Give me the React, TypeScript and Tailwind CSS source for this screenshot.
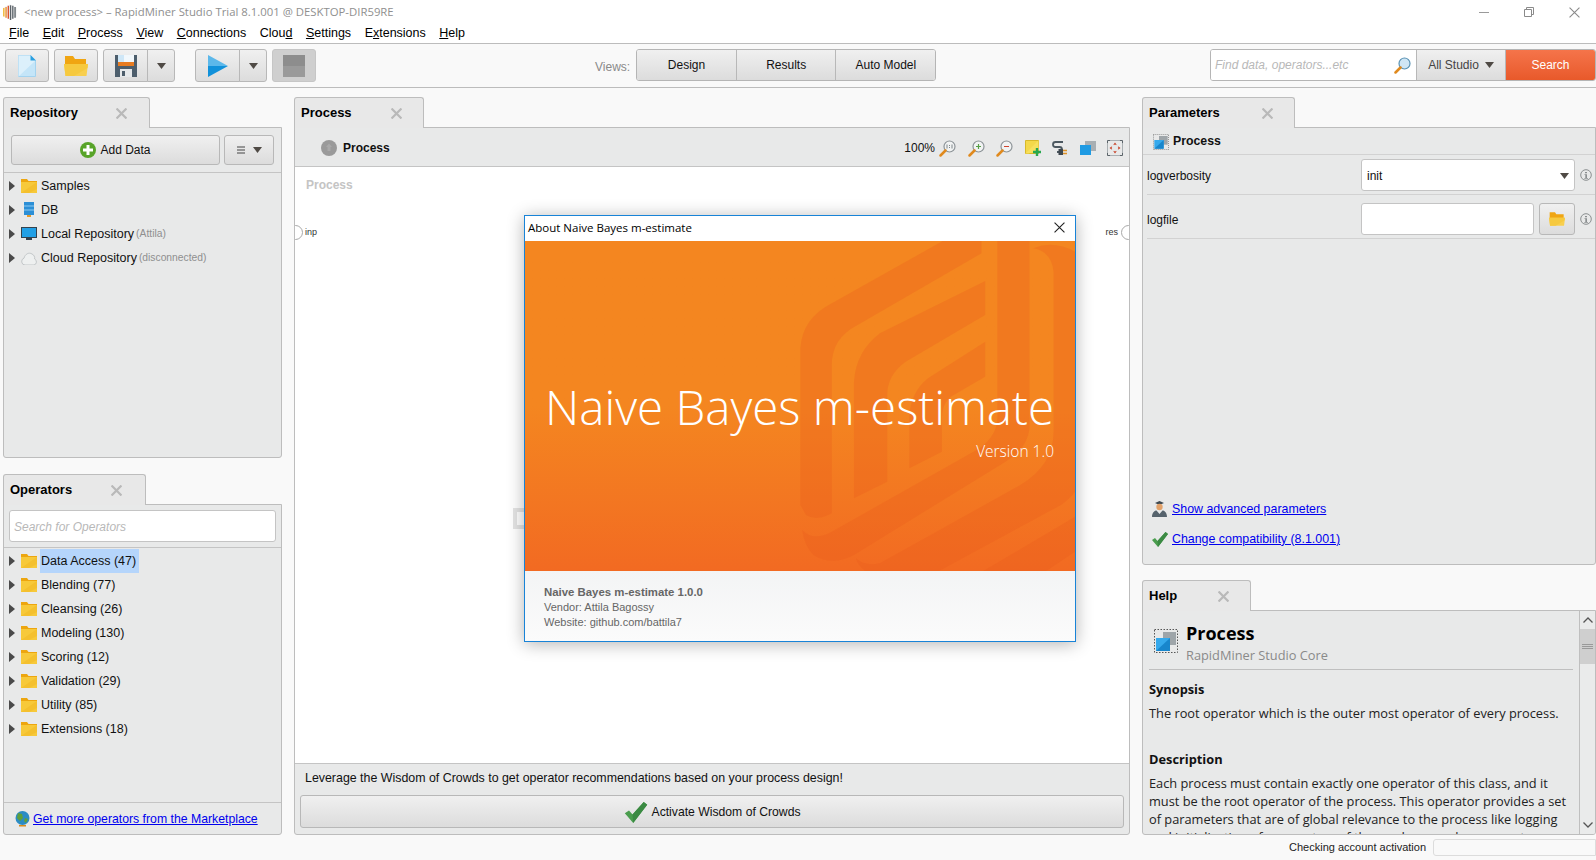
import type { ReactNode } from 'react'

const SANS = "font-['Liberation_Sans',Arial,sans-serif]"
const OPEN = "font-['Open_Sans',sans-serif]"

const MENU = [
  ['', 'F', 'ile'],
  ['', 'E', 'dit'],
  ['', 'P', 'rocess'],
  ['', 'V', 'iew'],
  ['', 'C', 'onnections'],
  ['Clou', 'd', ''],
  ['', 'S', 'ettings'],
  ['E', 'x', 'tensions'],
  ['', 'H', 'elp'],
]

const OPERATORS = [
  'Data Access (47)',
  'Blending (77)',
  'Cleansing (26)',
  'Modeling (130)',
  'Scoring (12)',
  'Validation (29)',
  'Utility (85)',
  'Extensions (18)',
]

function Folder({ w = 16, h = 14 }: { w?: number; h?: number }) {
  return (
    <svg width={w} height={h} viewBox="0 0 16 14">
      <path d="M0 0h6l1.500 2H16v12H0z" fill="#eda60f" />
      <path d="M0 3h16v11H0z" fill="#f7c93a" />
      <path d="M16 3v7l-8 4H0z" fill="#f4c02e" />
    </svg>
  )
}

function OpenFolder({ w = 24, h = 20 }: { w?: number; h?: number }) {
  return (
    <svg width={w} height={h} viewBox="0 0 24 20">
      <path d="M1 0h8l2 3h11v7H1z" fill="#f0a512" />
      <path d="M0 8h24l-1.500 12H1.500z" fill="#f8cf4f" />
      <path d="M24 8l-.5 4L10 20H1.500L0 8z" fill="#f6c93f" />
    </svg>
  )
}

function TreeArrow() {
  return (
    <svg width="6" height="10" viewBox="0 0 6 10">
      <path d="M0 0l6 5-6 5z" fill="#4a4a4a" />
    </svg>
  )
}

function Caret({ color = '#4f4a45' }: { color?: string }) {
  return (
    <svg width="9" height="6" viewBox="0 0 9 6">
      <path d="M0 0h9L4.500 6z" fill={color} />
    </svg>
  )
}

function CloseX({ size = 11, color = '#b9b9b9', width = 2 }: { size?: number; color?: string; width?: number }) {
  return (
    <svg width={size} height={size} viewBox="0 0 10 10">
      <path d="M0.500 0.500l9 9M9.500 0.500l-9 9" stroke={color} strokeWidth={width} fill="none" />
    </svg>
  )
}

function Check({ w = 16, h = 15 }: { w?: number; h?: number }) {
  return (
    <svg width={w} height={h} viewBox="0 0 16 15">
      <path d="M0 8l3-2 2.500 3L13.500 0 16 2 6 15z" fill="#4a9d4e" />
      <path d="M13.500 0L16 2 6 15l-.5-6z" fill="#3b8a43" />
    </svg>
  )
}

function ProcessIcon({ size = 16 }: { size?: number }) {
  return (
    <svg width={size} height={size} viewBox="0 0 24 24">
      <rect x="0.500" y="0.500" width="23" height="23" fill="none" stroke="#555" strokeDasharray="1.500 1.500" />
      <rect x="9" y="3" width="13" height="13" fill="#9ea5a9" />
      <rect x="2" y="9" width="14" height="13" fill="#35a9ec" />
      <path d="M2 22L16 9v13z" fill="#1886cc" />
    </svg>
  )
}

function Magnifier({ kind }: { kind: 'plain' | 'fit' | 'plus' | 'minus' }) {
  return (
    <svg width="17" height="17" viewBox="0 0 17 17">
      <circle cx="10.500" cy="6.500" r="5.500" fill={kind === 'plain' ? '#cfe6f5' : '#f1f3f3'} stroke={kind === 'plain' ? '#5a93b5' : '#8d9498'} strokeWidth="1.200" />
      <path d="M6.500 10.500L1.500 15.500" stroke="#e08a1e" strokeWidth="2.500" strokeLinecap="round" />
      {kind === 'plus' && <path d="M8 6.500h5M10.500 4v5" stroke="#55a044" strokeWidth="1.200" />}
      {kind === 'minus' && <path d="M8 6.500h5" stroke="#d0452f" strokeWidth="1.200" />}
      {kind === 'fit' && <path d="M8 4.500v4M13 4.500v4M10.500 5v1M10.500 7v1" stroke="#7f868a" strokeWidth="1" />}
    </svg>
  )
}

function InfoIcon() {
  return (
    <svg width="12" height="12" viewBox="0 0 12 12">
      <circle cx="6" cy="6" r="5.300" fill="none" stroke="#8b8f90" />
      <path d="M5 3h2v1.300H5zM4.500 5.300H7V9h1v.8H4.300V9h1V6.100h-.8z" fill="#8b8f90" />
    </svg>
  )
}

function Panel({
  title,
  tabWidth,
  closeAt,
  className,
  children,
}: {
  title: string
  tabWidth: string
  closeAt: string
  className?: string
  children: ReactNode
}) {
  return (
    <div className={`flex min-h-0 flex-col ${className ?? ''}`}>
      <div className={`relative z-10 -mb-px flex h-[31px] shrink-0 items-center rounded-t-[3px] border border-b-0 border-[#bdbdbd] bg-[#e8e8e8] pl-[6px] text-[13px] font-bold text-black ${tabWidth}`}>
        <span className={closeAt}>{title}</span>
        <CloseX />
      </div>
      <div className="flex min-h-0 flex-1 flex-col overflow-hidden rounded-b-[3px] border border-[#bdbdbd] bg-[#e8e9e9]">
        {children}
      </div>
    </div>
  )
}

function TreeRow({ icon, children }: { icon: ReactNode; children: ReactNode }) {
  return (
    <div className="flex h-[24px] items-center pl-[5px] text-[12.500px] text-[#111]">
      <TreeArrow />
      <span className="ml-[6px] flex w-[20px] shrink-0 justify-start">{icon}</span>
      {children}
    </div>
  )
}

function GradButton({ className, children }: { className?: string; children: ReactNode }) {
  return (
    <div className={`flex items-center justify-center border border-[#b8b8b8] bg-linear-to-b from-[#f0f0f0] to-[#dcdcdc] ${className ?? ''}`}>
      {children}
    </div>
  )
}

function TitleBar() {
  return (
    <div className="flex h-[24px] items-center bg-white">
      <svg className="ml-[2px]" width="16" height="18" viewBox="0 0 14 16">
        <path d="M7 1l6 3v8l-6 3-6-3V4z" fill="#f4f4f4" />
        <path d="M1.500 4.500v7.500" stroke="#f0b429" strokeWidth="1.200" />
        <path d="M3.500 3.500v9.500" stroke="#ee8a2a" strokeWidth="1.200" />
        <path d="M5.500 2.500v11.500" stroke="#d9502c" strokeWidth="1.200" />
        <path d="M7.500 2v13M9.500 2.500v11.500M11.500 3.500v9.500" stroke="#5a6268" strokeWidth="1.200" />
      </svg>
      <span className={`ml-[6px] text-[11.350px] text-[#8f8f8f] ${OPEN}`}>
        &lt;new process&gt; – RapidMiner Studio Trial 8.1.001 @ DESKTOP-DIR59RE
      </span>
      <div className="ml-auto flex items-center pr-[16px]">
        <span className="h-px w-[10px] bg-[#9a9a9a]" />
        <svg className="ml-[35px]" width="10" height="10" viewBox="0 0 10 10">
          <path d="M2.500 2.500V.5h7v7h-2M.5 2.500h7v7h-7z" fill="none" stroke="#8a8a8a" />
        </svg>
        <span className="ml-[35px] flex">
          <CloseX size={11} color="#8a8a8a" width={1} />
        </span>
      </div>
    </div>
  )
}

function MenuBar() {
  return (
    <div className="box-content flex h-[19px] items-center gap-[13.500px] border-b border-[#bcbcbc] bg-white pl-[9px] text-[12.500px] text-black">
      {MENU.map(([before, key, after]) => (
        <span key={before + key + after}>
          {before}
          <u>{key}</u>
          {after}
        </span>
      ))}
    </div>
  )
}

function Toolbar() {
  return (
    <div className="flex h-[44px] shrink-0 items-start border-b border-[#bcbcbc] bg-[#f9f9f9] pl-[5px] pt-[5px]">
      <GradButton className="h-[33px] w-[44px] rounded-[3px]">
        <svg width="18" height="22" viewBox="0 0 18 22">
          <path d="M.5.500h12l5 5v16H.5z" fill="#c4e5f8" stroke="#a3d3ef" />
          <path d="M.5.500h12l5 5L.5 21.500z" fill="#dcf0fb" />
          <path d="M12.500 0L18 5.500h-5.500z" fill="#2a9fe0" />
        </svg>
      </GradButton>
      <GradButton className="ml-[5px] h-[33px] w-[44px] rounded-[3px]">
        <OpenFolder />
      </GradButton>
      <GradButton className="ml-[5px] h-[33px] w-[45px] rounded-l-[3px]">
        <svg width="22" height="22" viewBox="0 0 22 22">
          <path d="M0 0h22v22H0z" fill="#4d5e6c" />
          <path d="M3 0h16v7H3z" fill="#cfe7f7" />
          <path d="M9 0h10v7H9z" fill="#f2f8fc" />
          <path d="M3 7h16v4H3z" fill="#e77c22" />
          <path d="M5 14h12v8H5z" fill="#e6e9eb" />
          <path d="M7 16h3v5H7z" fill="#4d5e6c" />
        </svg>
      </GradButton>
      <GradButton className="-ml-px h-[33px] w-[28px] rounded-r-[3px]">
        <Caret />
      </GradButton>
      <GradButton className="ml-[20px] h-[33px] w-[45px] rounded-l-[3px]">
        <svg width="20" height="22" viewBox="0 0 20 22">
          <path d="M0 0l20 11H0z" fill="#5cb8ea" />
          <path d="M0 22l20-11H0z" fill="#1191da" />
        </svg>
      </GradButton>
      <GradButton className="-ml-px h-[33px] w-[28px] rounded-r-[3px]">
        <Caret />
      </GradButton>
      <div className="ml-[5px] flex h-[33px] w-[44px] items-center justify-center rounded-[3px] border border-[#c6c6c6] bg-[#cfcfcf]">
        <div className="flex h-[22px] w-[22px] flex-col">
          <span className="flex-1 bg-[#8d8d8d]" />
          <span className="flex-1 bg-[#9a9a9a]" />
        </div>
      </div>

      <span className="ml-[279px] mt-[9px] text-[12px] text-[#8a8a8a]">Views:</span>
      <div className="ml-[6px] flex h-[32px] w-[300px] overflow-hidden rounded-[3px] border border-[#b5b5b5] text-[12px] text-[#111]">
        <GradButton className="flex-1 border-0 border-r">Design</GradButton>
        <GradButton className="flex-1 border-0 border-r">Results</GradButton>
        <GradButton className="flex-1 border-0">Auto Model</GradButton>
      </div>

      <div className="ml-auto flex h-[32px] w-[386px] overflow-hidden rounded-[3px] border border-[#b5b5b5] text-[12px]">
        <div className="flex w-[205px] items-center justify-between bg-white pl-[4px] pr-[5px]">
          <span className="italic text-[#b8b8b8]">Find data, operators...etc</span>
          <Magnifier kind="plain" />
        </div>
        <GradButton className="w-[90px] gap-[6px] border-0 border-x text-[#444]">
          All Studio
          <Caret />
        </GradButton>
        <div className="flex flex-1 items-center justify-center bg-linear-to-b from-[#f5744a] to-[#e8592a] text-white">
          Search
        </div>
      </div>
    </div>
  )
}

function LeftColumn() {
  return (
    <div className="flex w-[279px] shrink-0 flex-col">
      <Panel title="Repository" tabWidth="w-[147px]" closeAt="w-[106px]" className="h-[361px]">
        <div className="flex h-[45px] shrink-0 items-center gap-[4px] border-b border-[#c4c4c4] px-[7px] pb-[1px]">
          <GradButton className="h-[30px] w-[209px] gap-[4px] rounded-[3px] text-[12px] text-[#111]">
            <svg width="16" height="16" viewBox="0 0 16 16">
              <circle cx="8" cy="8" r="8" fill="#58a429" />
              <path d="M6.500 3h3v3.500H13v3H9.500V13h-3V9.500H3v-3h3.500z" fill="#fff" />
            </svg>
            Add Data
          </GradButton>
          <GradButton className="h-[30px] w-[50px] gap-[8px] rounded-[3px]">
            <svg width="8" height="8" viewBox="0 0 8 8">
              <path d="M0 1h8M0 4h8M0 7h8" stroke="#444" />
            </svg>
            <Caret />
          </GradButton>
        </div>
        <div className="pt-[1px]">
          <TreeRow icon={<Folder />}>Samples</TreeRow>
          <TreeRow
            icon={
              <svg className="ml-[3px]" width="10" height="16" viewBox="0 0 10 16">
                <path d="M0 0h10v13H0z" fill="#2c8fd6" />
                <path d="M0 4h10M0 8h10" stroke="#8ccaf0" />
                <path d="M3 13h4v2H3z" fill="#e59a28" />
              </svg>
            }
          >
            DB
          </TreeRow>
          <TreeRow
            icon={
              <svg width="16" height="14" viewBox="0 0 16 14">
                <path d="M0 0h16v11H0z" fill="#34424e" />
                <path d="M1 1h14v9H1z" fill="#22a0e6" />
                <path d="M5 11h6v2H5z" fill="#34424e" />
              </svg>
            }
          >
            Local Repository
            <span className="ml-[2px] text-[10.300px] text-[#8f8f8f]">(Attila)</span>
          </TreeRow>
          <TreeRow
            icon={
              <svg width="16" height="13" viewBox="0 0 16 13">
                <path d="M4 13a3.500 3.500 0 0 1-1-6.800C4 2 8 0 11 2c2 .8 3 3 2.600 5A3.200 3.200 0 0 1 13 13z" fill="#eef0f0" stroke="#c2c6c8" />
              </svg>
            }
          >
            Cloud Repository
            <span className="ml-[2px] text-[10.300px] text-[#8f8f8f]">(disconnected)</span>
          </TreeRow>
        </div>
      </Panel>

      <Panel title="Operators" tabWidth="w-[143px]" closeAt="w-[101px]" className="mt-[16px] flex-1">
        <div className="h-[43px] shrink-0 border-b border-[#c4c4c4] px-[5px] pt-[5px]">
          <div className="flex h-[32px] items-center rounded-[3px] border border-[#c4c4c4] bg-white pl-[4px] pt-px text-[12px] italic text-[#b8b8b8]">
            Search for Operators
          </div>
        </div>
        <div className="flex-1 pt-px">
          {OPERATORS.map((name, i) => (
            <TreeRow key={name} icon={<Folder />}>
              <span className={`-ml-px flex h-[24px] items-center pl-px pr-[3px] ${i === 0 ? 'bg-[#b5d5fb]' : ''}`}>{name}</span>
            </TreeRow>
          ))}
        </div>
        <div className="flex h-[32px] shrink-0 items-center border-t border-[#c4c4c4] pl-[11px] pt-px text-[12.250px] text-[#0000ee]">
          <svg width="15" height="16" viewBox="0 0 15 16">
            <path d="M4 14h7v1.500H4z" fill="#d98a1c" />
            <circle cx="7.500" cy="7" r="7" fill="#2b8cc4" />
            <path d="M3 2l4 1 1 4-3 3-3-3zM10 7l3 1-2 4-2-2z" fill="#5f9f3a" />
          </svg>
          <u className="ml-[3px]">Get more operators from the Marketplace</u>
        </div>
      </Panel>
    </div>
  )
}

function ProcessColumn() {
  return (
    <Panel title="Process" tabWidth="w-[130px]" closeAt="w-[90px]" className="ml-[12px] w-[836px] shrink-0">
      <div className="flex h-[39px] shrink-0 items-center border-b border-[#c4c4c4] pl-[26px] pr-[6px] pt-[2px]">
        <svg width="16" height="16" viewBox="0 0 16 16">
          <circle cx="8" cy="8" r="8" fill="#9a9a9a" />
          <path d="M8 3.500l3 3.500H9.500v4h-3V7H5z" fill="#a9a9a9" />
        </svg>
        <span className="ml-[6px] text-[12px] font-bold text-[#111]">Process</span>
        <span className="ml-auto text-[12px] text-[#111]">100%</span>
        <div className="ml-[4px] flex items-center gap-[11.500px]">
          <Magnifier kind="fit" />
          <Magnifier kind="plus" />
          <Magnifier kind="minus" />
          <svg width="16" height="16" viewBox="0 0 16 16">
            <path d="M.5.500h13v13H.5z" fill="#f4d84a" stroke="#d8b92a" />
            <path d="M13.500.5v10l-10 3h-3z" fill="#f7e05e" />
            <path d="M8 12h8M12 8v8" stroke="#29a84f" strokeWidth="2.400" />
          </svg>
          <svg width="16" height="16" viewBox="0 0 16 16">
            <path d="M11 2H3.500a2.500 2.500 0 0 0 0 5h4a2.500 2.500 0 0 1 0 5H5" fill="none" stroke="#4c5860" strokeWidth="1.800" />
            <path d="M6.500 9h4.500v6H6.500z" fill="#3e474e" />
            <path d="M11 10.500h4M11 13.500h4" stroke="#e0932a" strokeWidth="1.300" />
          </svg>
          <svg width="16" height="14" viewBox="0 0 16 14">
            <path d="M5 0h11v10H5z" fill="#a8afb3" />
            <path d="M0 4h11v10H0z" fill="#1f9be3" />
          </svg>
          <svg width="16" height="16" viewBox="0 0 16 16">
            <path d="M0.500 3.500v-3h3M12.500.5h3v3M15.500 12.500v3h-3M3.500 15.500h-3v-3" fill="none" stroke="#5a6368" />
            <path d="M3.500.5h9M3.500 15.500h9M.5 3.500v9M15.500 3.500v9" stroke="#a9afb2" />
            <circle cx="8" cy="8" r="3" fill="none" stroke="#e3e5e5" />
            <path d="M8 2.500l1.800 2.300H6.200zM8 13.500l1.800-2.300H6.200zM2.500 8l2.300-1.800v3.600zM13.500 8l-2.300-1.800v3.600z" fill="#c9472e" />
          </svg>
        </div>
      </div>

      <div className="relative flex-1 bg-white">
        <span className="absolute left-[11px] top-[9px] text-[12px] font-bold text-[#c4c4c4]">Process</span>
        <span className="absolute -left-[7px] top-[58px] h-[15px] w-[15px] rounded-full border border-[#a8a8a8] bg-white" />
        <span className="absolute left-[10px] top-[59px] text-[9px] text-[#333]">inp</span>
        <span className="absolute right-[11px] top-[59px] text-[9px] text-[#333]">res</span>
        <span className="absolute -right-[7px] top-[58px] h-[15px] w-[15px] rounded-full border border-[#a8a8a8] bg-white" />
        <span className="absolute left-[218px] top-[341px] h-[21px] w-[20px] border-[4px] border-[#e4e4e4] bg-white" />
      </div>

      <div className="flex h-[71px] shrink-0 flex-col border-t border-[#c4c4c4] px-[5px]">
        <span className="mt-[5px] h-[21px] pl-[5px] text-[12.400px] leading-[18px] text-[#111]">
          Leverage the Wisdom of Crowds to get operator recommendations based on your process design!
        </span>
        <GradButton className="mt-[5px] h-[33px] gap-[4px] rounded-[3px] pt-px text-[12.200px] text-[#111]">
          <Check w={24} h={21} />
          Activate Wisdom of Crowds
        </GradButton>
      </div>
    </Panel>
  )
}

function RightColumn() {
  return (
    <div className="ml-[12px] flex min-w-0 flex-1 flex-col">
      <Panel title="Parameters" tabWidth="w-[153px]" closeAt="w-[113px]" className="h-[468px]">
        <div className="flex h-[27px] shrink-0 items-center gap-[4px] border-b border-[#d2d2d2] pl-[10px] pt-px text-[12.300px] font-bold text-[#111]">
          <ProcessIcon />
          Process
        </div>
        <div className="ml-[4px] flex h-[40px] shrink-0 items-start border-b border-[#d2d2d2] pt-[4px] text-[12px] text-[#111]">
          <span className="w-[214px] leading-[34px]">logverbosity</span>
          <div className="flex h-[32px] w-[214px] items-center justify-between rounded-[3px] border border-[#c4c4c4] bg-white px-[5px] pt-px">
            init
            <Caret />
          </div>
          <span className="ml-[5px] mt-[10px] flex">
            <InfoIcon />
          </span>
        </div>
        <div className="ml-[4px] flex h-[44px] shrink-0 items-start border-b border-[#d2d2d2] pt-[8px] text-[12px] text-[#111]">
          <span className="w-[214px] leading-[34px]">logfile</span>
          <div className="h-[32px] w-[173px] rounded-[3px] border border-[#c4c4c4] bg-white" />
          <GradButton className="ml-[5px] h-[32px] w-[36px] rounded-[3px]">
            <OpenFolder w={16} h={14} />
          </GradButton>
          <span className="ml-[5px] mt-[10px] flex">
            <InfoIcon />
          </span>
        </div>
        <div className="flex-1" />
        <div className="flex h-[16px] items-center pl-[9px] text-[12.400px] text-[#0000ee]">
          <svg width="15" height="16" viewBox="0 0 15 16">
            <path d="M3 2l4.500-2L12 2l-4.500 2z" fill="#3f4a52" />
            <circle cx="7.500" cy="6" r="3.200" fill="#e2a26a" />
            <path d="M0 16c0-5 3-6.500 4.500-6.500L7.500 13l3-3.500C12 9.500 15 11 15 16z" fill="#56636c" />
          </svg>
          <u className="ml-[5px]">Show advanced parameters</u>
        </div>
        <div className="mb-[17px] mt-[14px] flex h-[16px] items-center pl-[9px] text-[12.400px] text-[#0000ee]">
          <Check />
          <u className="ml-[4px]">Change compatibility (8.1.001)</u>
        </div>
      </Panel>

      <Panel title="Help" tabWidth="w-[109px]" closeAt="w-[69px]" className="mt-[15px] flex-1">
        <div className={`flex min-h-0 flex-1 ${OPEN}`}>
          <div className="min-w-0 flex-1 overflow-hidden px-[6px]">
            <div className="flex h-[59px] border-b border-[#bfbfbf]">
              <span className="ml-[5px] mt-[18px]">
                <ProcessIcon size={24} />
              </span>
              <div className="ml-[8px] pt-[10px]">
                <div className="text-[18px] font-bold leading-[24px] text-black">Process</div>
                <div className="text-[12.800px] leading-[20px] text-[#8a8a8a]">RapidMiner Studio Core</div>
              </div>
            </div>
            <div className="mt-[10px] text-[12.800px] font-bold leading-[18px] text-[#111]">Synopsis</div>
            <p className="mt-[6px] text-[12.800px] leading-[18px] text-[#222]">
              The root operator which is the outer most operator of every process.
            </p>
            <div className="mt-[28px] text-[12.800px] font-bold leading-[18px] text-[#111]">Description</div>
            <p className="mt-[6px] text-[12.800px] leading-[18px] text-[#222]">
              Each process must contain exactly one operator of this class, and it must be the root operator of the process. This operator provides a set of parameters that are of global relevance to the process like logging and initialization of parameters of the random number generator.
            </p>
          </div>
          <div className="flex w-[16px] shrink-0 flex-col items-center border-l border-[#bfbfbf] bg-[#eaebeb]">
            <svg className="mt-[6px]" width="10" height="6" viewBox="0 0 10 6">
              <path d="M.5 5.500L5 1l4.500 4.500" fill="none" stroke="#555" strokeWidth="1.300" />
            </svg>
            <div className="mt-[6px] flex h-[35px] w-full items-center justify-center bg-[#cfcfcf]">
              <svg width="11" height="6" viewBox="0 0 11 6">
                <path d="M0 .5h11M0 2.500h11M0 4.500h11" stroke="#9a9a9a" />
              </svg>
            </div>
            <svg className="mb-[6px] mt-auto" width="10" height="6" viewBox="0 0 10 6">
              <path d="M.5.500L5 5l4.500-4.500" fill="none" stroke="#555" strokeWidth="1.300" />
            </svg>
          </div>
        </div>
      </Panel>
    </div>
  )
}

function AboutDialog() {
  return (
    <div className="absolute left-[524px] top-[215px] flex h-[427px] w-[552px] flex-col border border-[#1883d7] bg-white shadow-[0_2px_16px_rgba(0,0,0,0.3)]">
      <div className={`flex h-[25px] shrink-0 items-center justify-between pb-[2px] pl-[3px] pr-[10px] text-[11.500px] text-black ${OPEN}`}>
        About Naive Bayes m-estimate
        <CloseX size={11} color="#222" width={1} />
      </div>
      <div className={`relative h-[330px] shrink-0 overflow-hidden bg-linear-to-b from-[#f48620] from-50% to-[#f26a22] ${OPEN}`}>
        <svg className="absolute inset-0 h-full w-full" viewBox="40 108 1488 990" preserveAspectRatio="none">
          <g fill="#e85a1c" fillOpacity="0.28">
            <path d="M785 900V430Q790 340 870 295L1170 108H1275V145L940 360Q870 400 870 480V925Q830 950 800 930Z" />
            <path d="M930 880V530Q935 440 1000 385L1285 228V330L1070 470Q1020 510 1020 570V830Z" />
            <path d="M1080 790V630Q1085 560 1130 520L1285 410V515L1200 570Q1168 590 1168 640V740Z" />
            <path d="M1318 108H1405V670Q1400 730 1340 770L930 1050Q870 1085 820 1050Q795 1020 790 975Q820 1010 870 980L1270 730Q1318 690 1318 640Z" />
            <path d="M1415 130Q1470 105 1528 140V860Q1515 880 1490 900L1160 1098H960Q940 1080 935 1060Q960 1085 1000 1075L1380 840Q1470 780 1470 680V200Q1465 140 1415 130Z" />
            <path d="M1280 1098L1528 935V1040L1450 1098Z" />
          </g>
        </svg>
        <div className="relative pr-[21px] pt-[134px] text-right text-white">
          <div className="text-[47.500px] font-light leading-[64px]">Naive Bayes m-estimate</div>
          <div className="mt-[2px] text-[15.500px] font-light leading-[20px]">Version 1.0</div>
        </div>
      </div>
      <div className="flex-1 bg-linear-to-b from-[#f3f4f5] to-[#fbfbfb] pl-[19px] pt-[14px] text-[11px] leading-[15px] text-[#666]">
        <div className="text-[11.400px] font-bold">Naive Bayes m-estimate 1.0.0</div>
        <div>Vendor: Attila Bagossy</div>
        <div>Website: github.com/battila7</div>
      </div>
    </div>
  )
}

export default function App() {
  return (
    <div className={`relative flex h-[860px] w-[1596px] flex-col overflow-hidden bg-[#f9f9f9] ${SANS}`}>
      <TitleBar />
      <MenuBar />
      <Toolbar />
      <div className="flex min-h-0 flex-1 pl-[3px] pt-[9px]">
        <LeftColumn />
        <ProcessColumn />
        <RightColumn />
      </div>
      <div className="flex h-[25px] shrink-0 items-center justify-end text-[11px] text-[#222]">
        Checking account activation
        <span className="ml-[7px] h-[17px] w-[163px] rounded-l-[3px] border border-[#dcdcdc]" />
      </div>
      <AboutDialog />
    </div>
  )
}
